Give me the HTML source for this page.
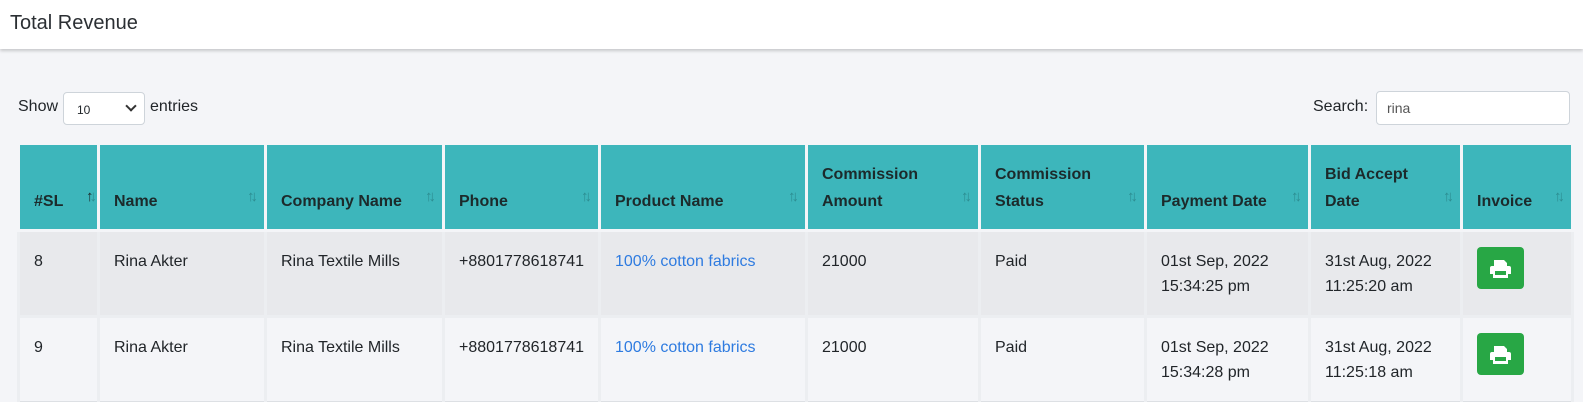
<!DOCTYPE html>
<html><head><meta charset="utf-8"><style>
body{margin:0;width:1583px;height:401px;overflow:hidden;background:#f4f5f8;font-family:"Liberation Sans",sans-serif;color:#212529;}
.top{position:absolute;left:0;top:0;width:1583px;height:49px;background:#fff;box-shadow:0 2px 3px rgba(0,0,0,.18);}
.top span{position:absolute;left:10px;top:12px;font-size:20px;color:#2b2f33;}
.show{position:absolute;left:18px;top:98px;font-size:16px;}
.sel{position:absolute;left:63px;top:92px;width:82px;height:33px;background:#fff;border:1px solid #ced4da;border-radius:4px;box-sizing:border-box;font-size:12px;}
.sel b{position:absolute;left:13px;top:10px;font-weight:normal}
.sel i{position:absolute;right:9px;top:9px;width:6px;height:6px;border-right:2px solid #333;border-bottom:2px solid #333;transform:rotate(45deg);}
.ent{position:absolute;left:150px;top:98px;font-size:16px;}
.sl{position:absolute;left:1313px;top:98px;font-size:16px;}
.sb{position:absolute;left:1376px;top:91px;width:194px;height:34px;background:#fff;border:1px solid #ced4da;border-radius:4px;box-sizing:border-box;font-size:14px;color:#555;padding:8px 0 0 10px;}
table{position:absolute;left:17px;top:142px;border-collapse:collapse;table-layout:fixed;width:1554px;border:1px solid #dde0e4;}
th,td{text-align:left;vertical-align:top;font-size:16px;}
th{background:#3db6bb;border:3px solid #f4f5f8;height:70px;vertical-align:bottom;padding:0 14px 14px;font-weight:bold;line-height:27px;color:#1c2a2b;position:relative;}
th .a{position:absolute;right:10px;bottom:19px;font-size:15px;color:#2c8d91;font-weight:normal;letter-spacing:-4px}
td{border:3px solid #eceef1;padding:17px 14px 0;line-height:25px;height:66px;}
tr.r1 td{background:#e8e9ec}
tr.r2 td{background:#f4f5f8;border-bottom:none}
a{color:#2e7be0;text-decoration:none}
.btn{display:inline-block;width:47px;height:42px;background:#28a745;border-radius:4px;margin-top:-2px;position:relative}
</style></head><body>
<div class="top"><span>Total Revenue</span></div>
<div class="show">Show</div><div class="sel"><b>10</b><i></i></div><div class="ent">entries</div>
<div class="sl">Search:</div><div class="sb">rina</div>
<table>
<colgroup><col style="width:80px"><col style="width:167px"><col style="width:178px"><col style="width:156px"><col style="width:207px"><col style="width:173px"><col style="width:166px"><col style="width:164px"><col style="width:152px"><col style="width:111px"></colgroup>
<tr><th>#SL <span class="a" style="right:4px;color:#1c2a2b">↑<span style="color:#2c8d91">↓</span></span></th><th>Name<span class="a">↑↓</span></th><th>Company Name<span class="a">↑↓</span></th><th>Phone<span class="a">↑↓</span></th><th>Product Name<span class="a">↑↓</span></th><th>Commission<br>Amount<span class="a">↑↓</span></th><th>Commission<br>Status<span class="a">↑↓</span></th><th>Payment Date<span class="a">↑↓</span></th><th>Bid Accept<br>Date<span class="a">↑↓</span></th><th>Invoice<span class="a">↑↓</span></th></tr>
<tr class="r1"><td>8</td><td>Rina Akter</td><td>Rina Textile Mills</td><td>+8801778618741</td><td><a>100% cotton fabrics</a></td><td>21000</td><td>Paid</td><td>01st Sep, 2022<br>15:34:25 pm</td><td>31st Aug, 2022<br>11:25:20 am</td><td><span class="btn"><svg width="47" height="42" viewBox="0 0 47 42"><path d="M17 13h10l3 3v3H17z M15 19h17q2 0 2 2v6h-3v4H16v-4h-3v-6q0-2 2-2z" fill="#fff"/><rect x="18" y="24" width="11" height="4" fill="#28a745"/></svg></span></td></tr>
<tr class="r2"><td>9</td><td>Rina Akter</td><td>Rina Textile Mills</td><td>+8801778618741</td><td><a>100% cotton fabrics</a></td><td>21000</td><td>Paid</td><td>01st Sep, 2022<br>15:34:28 pm</td><td>31st Aug, 2022<br>11:25:18 am</td><td><span class="btn"><svg width="47" height="42" viewBox="0 0 47 42"><path d="M17 13h10l3 3v3H17z M15 19h17q2 0 2 2v6h-3v4H16v-4h-3v-6q0-2 2-2z" fill="#fff"/><rect x="18" y="24" width="11" height="4" fill="#28a745"/></svg></span></td></tr>
</table>
</body></html>
